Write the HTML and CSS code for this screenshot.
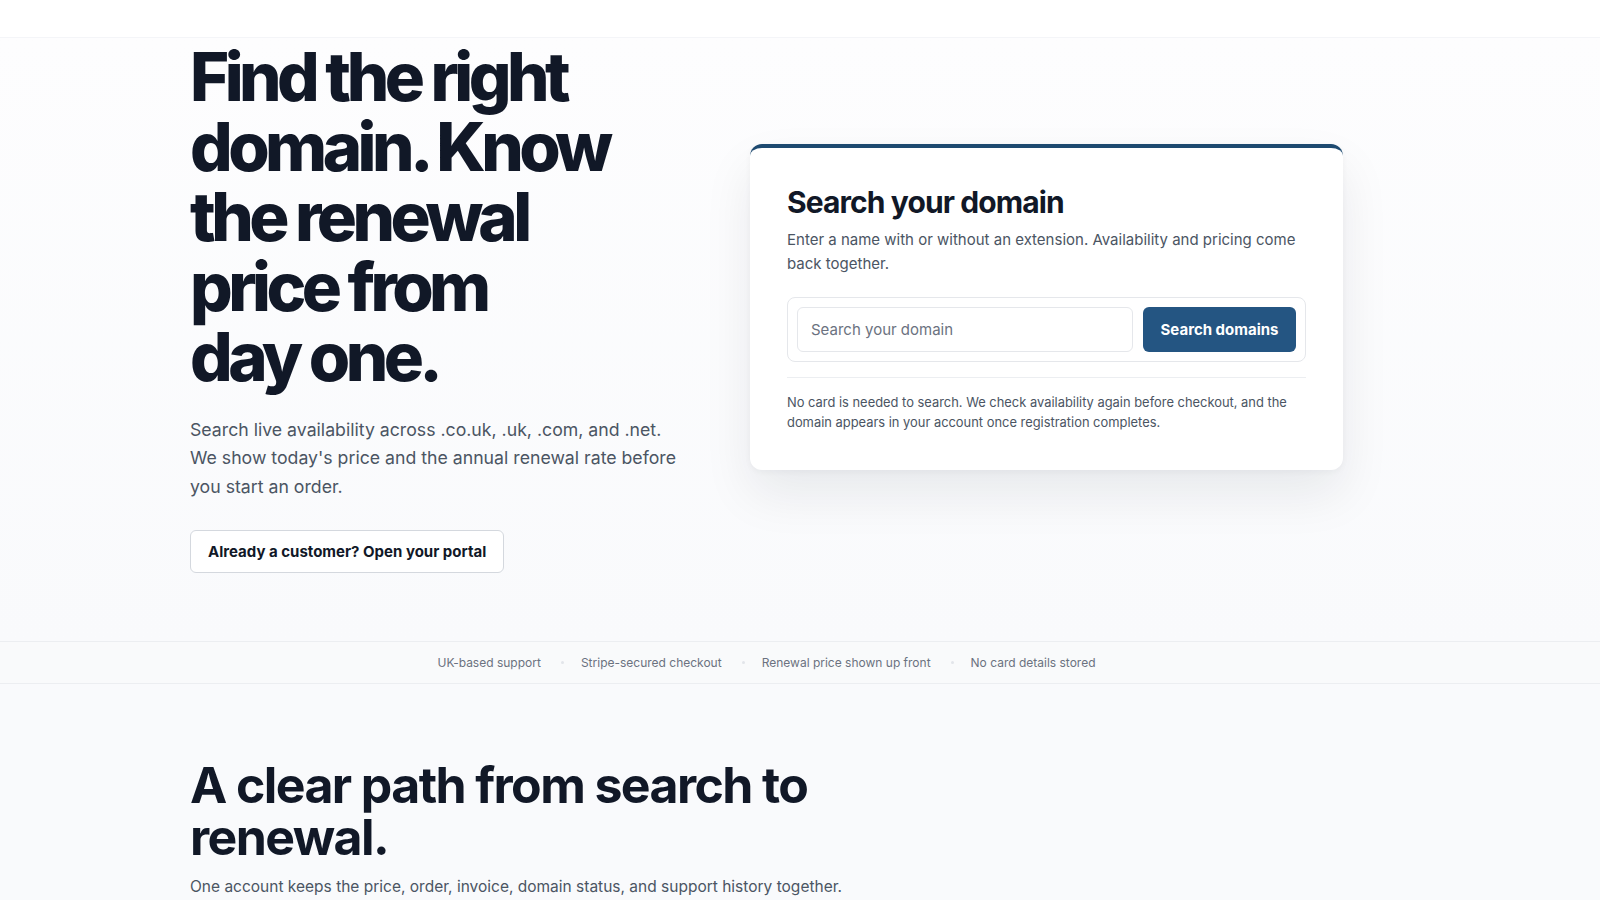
FILE: index.html
```html
<!DOCTYPE html>
<html lang="en-GB">
<head>
  <meta charset="UTF-8">
  <meta name="viewport" content="width=device-width, initial-scale=1.0">
  <title>Domains - Search and register</title>
  <link rel="stylesheet" href="styles.css">
</head>
<body>
  <div class="topbar"></div>

  <section class="hero">
    <div class="container hero-grid">
      <div class="hero-copy">
        <h1>Find the right domain. Know the renewal price from <span class="nowrap">day one.</span></h1>
        <p class="lead">Search live availability across .co.uk, .uk, .com, and .net. We show today's price and the annual renewal rate before you start an order.</p>
        <a href="#" class="btn-outline">Already a customer? Open your portal</a>
      </div>

      <div class="search-card">
        <h2>Search your domain</h2>
        <p class="card-intro">Enter a name with or without an extension. Availability and pricing come back together.</p>

        <form id="searchForm" class="search-form">
          <input type="text" id="domain" name="domain" placeholder="Search your domain">
          <button type="submit">Search domains</button>
        </form>

        <p class="card-note">No card is needed to search. We check availability again before checkout, and the domain appears in your account once registration completes.</p>
      </div>
    </div>
  </section>

  <div class="trust-bar">
    <ul>
      <li>UK-based support</li>
      <li>Stripe-secured checkout</li>
      <li>Renewal price shown up front</li>
      <li>No card details stored</li>
    </ul>
  </div>

  <section class="path">
    <div class="container">
      <h2>A clear path from search to renewal.</h2>
      <p>One account keeps the price, order, invoice, domain status, and support history together.</p>
    </div>
  </section>
</body>
</html>
```

FILE: styles.css
```css
* {
  margin: 0;
  padding: 0;
  box-sizing: border-box;
}

body {
  background-color: #f9fafc;
  color: #111827;
  font-family: Inter, "Noto Sans", sans-serif;
}

.container {
  width: 1220px;
  margin: 0 auto;
}

.nowrap {
  white-space: nowrap;
}

.topbar {
  height: 38px;
  background-color: #fff;
  border-bottom: 1px solid #f4f5f8;
}

.hero {
  background: linear-gradient(180deg, #fdfdfe 0%, #f9fafc 100%);
  padding: 4px 0 68px;
}

.hero-grid {
  display: grid;
  grid-template-columns: 500px 593px;
  column-gap: 60px;
  align-items: center;
}

.hero-copy h1 {
  font-size: 67px;
  font-weight: 800;
  line-height: 1.045;
  letter-spacing: -0.068em;
  color: #111827;
  width: 430px;
}

.lead {
  margin-top: 24px;
  font-size: 17.7px;
  line-height: 1.6;
  color: #4b5563;
}

.btn-outline {
  display: inline-block;
  margin-top: 29px;
  padding: 11px 17px;
  background-color: #fff;
  border: 1px solid #d4d8de;
  border-radius: 6px;
  color: #111827;
  font-size: 15px;
  font-weight: 700;
  text-decoration: none;
}

/* Search card */
.search-card {
  background-color: #fff;
  border-top: 4px solid #1e4a70;
  border-radius: 12px;
  box-shadow: 0 24px 50px rgba(15, 23, 42, 0.08), 0 2px 6px rgba(15, 23, 42, 0.04);
  padding: 36px 37px 37px;
}

.search-card h2 {
  font-size: 30px;
  font-weight: 700;
  letter-spacing: -0.03em;
  line-height: 1.2;
  color: #111827;
}

.card-intro {
  margin-top: 8px;
  font-size: 15px;
  line-height: 1.6;
  color: #4b5563;
}

.search-form {
  display: flex;
  gap: 10px;
  margin-top: 21px;
  padding: 9px;
  border: 1px solid #e5e7eb;
  border-radius: 8px;
}

.search-form input {
  flex: 1;
  height: 45px;
  padding: 0 13px;
  border: 1px solid #e5e7eb;
  border-radius: 6px;
  font-family: inherit;
  font-size: 15px;
  color: #111827;
}

.search-form input::placeholder {
  color: #6b7280;
}

.search-form button {
  width: 153px;
  height: 45px;
  background-color: #245582;
  color: #fff;
  border: none;
  border-radius: 6px;
  font-family: inherit;
  font-size: 15px;
  font-weight: 700;
  cursor: pointer;
}

.card-note {
  margin-top: 15px;
  padding-top: 15px;
  border-top: 1px solid #eceef1;
  font-size: 12.9px;
  line-height: 1.55;
  color: #4b5563;
}

/* Trust strip */
.trust-bar {
  border-top: 1px solid #eceef1;
  border-bottom: 1px solid #eceef1;
  background-color: #f9fafb;
}

.trust-bar ul {
  display: flex;
  justify-content: center;
  align-items: center;
  height: 41px;
  padding-right: 67px;
  list-style: none;
}

.trust-bar li {
  font-size: 12px;
  color: #6b7280;
}

.trust-bar li + li::before {
  content: "";
  display: inline-block;
  width: 3px;
  height: 3px;
  margin: 0 17px 2px 20px;
  border-radius: 50%;
  background-color: #e2e5ea;
  vertical-align: middle;
}

/* Second section */
.path {
  padding-top: 75px;
}

.path h2 {
  font-size: 50px;
  font-weight: 700;
  line-height: 1.04;
  letter-spacing: -0.032em;
  color: #111827;
  width: 660px;
}

.path p {
  margin-top: 12px;
  font-size: 15.5px;
  line-height: 1.5;
  color: #4b5563;
}
```
